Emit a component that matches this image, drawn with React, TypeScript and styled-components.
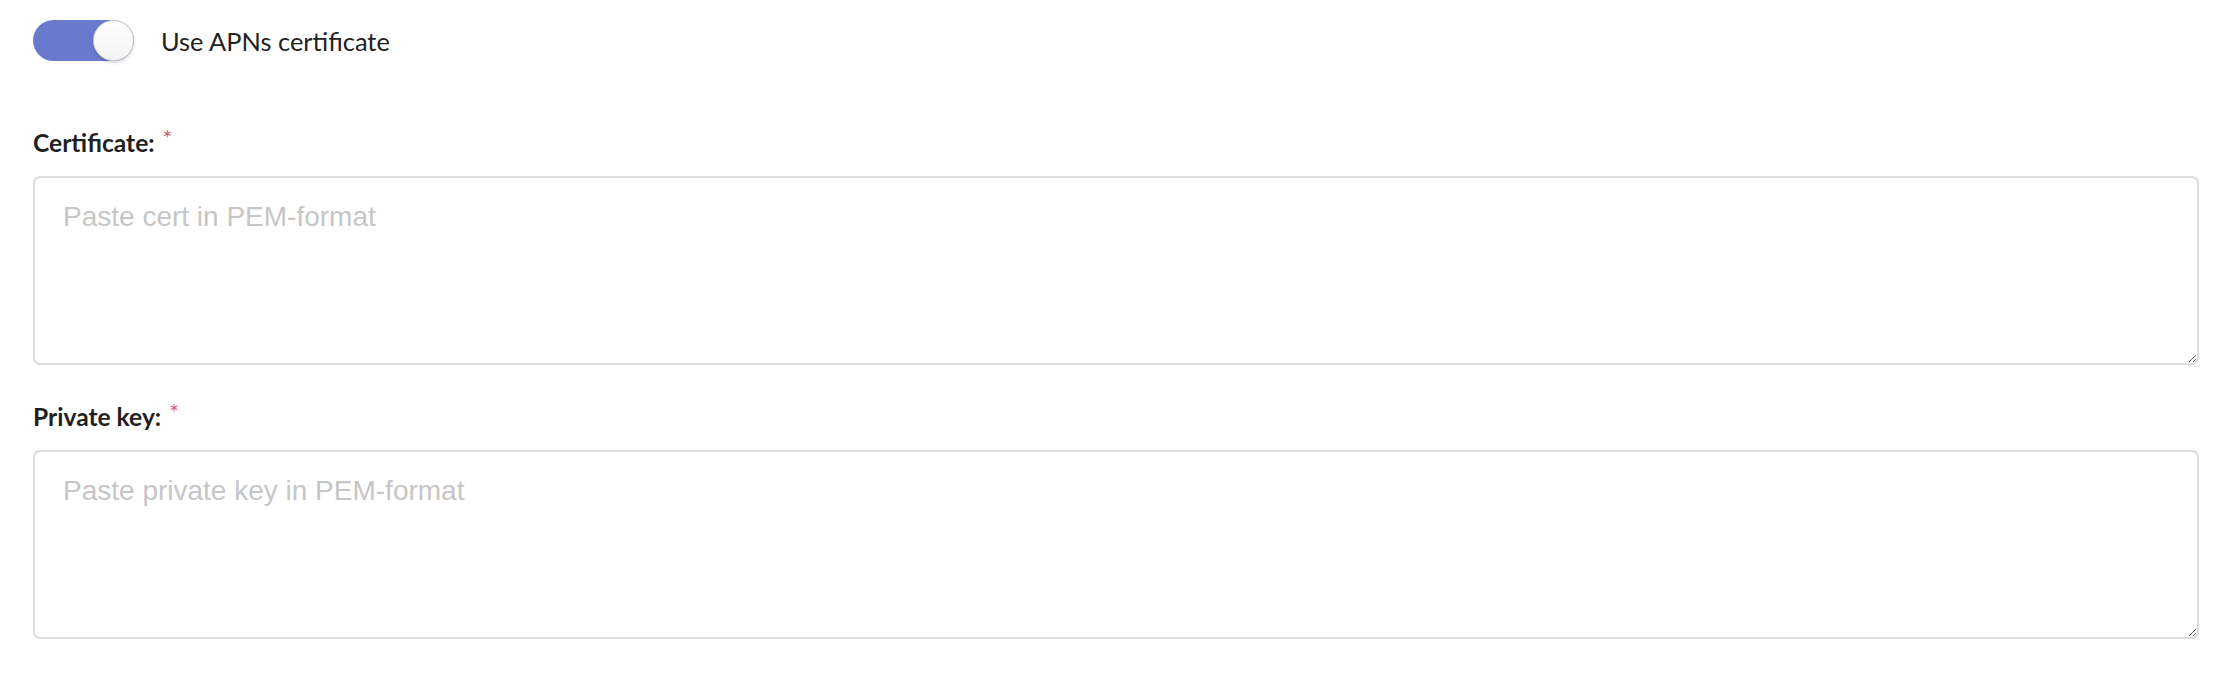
import React from "react";
import styled, { createGlobalStyle } from "styled-components";

const GlobalStyle = createGlobalStyle`
  body {
    margin: 0;
    background: #ffffff;
    font-family: Lato, "Noto Sans", sans-serif;
  }
`;

const fields = [
  { label: "Certificate:", placeholder: "Paste cert in PEM-format" },
  { label: "Private key:", placeholder: "Paste private key in PEM-format" },
];

const App = () => {
  return (
    <>
      <GlobalStyle />
      <Page>
        <ToggleRow>
          <Track>
            <Knob />
          </Track>
          <ToggleLabel>Use APNs certificate</ToggleLabel>
        </ToggleRow>

        {fields.map((field) => (
          <Field key={field.label}>
            <Label>
              {field.label}
              <Required>*</Required>
            </Label>
            <TextArea placeholder={field.placeholder} />
          </Field>
        ))}
      </Page>
    </>
  );
};

export default App;

const Page = styled.div`
  display: flex;
  flex-direction: column;
  padding: 20px 37px 0 33px;
`;

const ToggleRow = styled.div`
  display: flex;
  flex-direction: row;
  align-items: center;
  gap: 27px;
  height: 41px;
  margin-bottom: 30px;
`;

const Track = styled.div`
  display: flex;
  justify-content: flex-end;
  width: 101px;
  height: 41px;

  background-color: #6979cc;
  border-radius: 21px;
`;

const Knob = styled.div`
  box-sizing: border-box;
  width: 41px;
  height: 41px;

  background: linear-gradient(180deg, #ffffff 0%, #f3f3f3 100%);
  border: 1.5px solid #d4d4d4;
  border-radius: 50%;
  box-shadow: 0 2px 3px rgba(0, 0, 0, 0.15);
`;

const ToggleLabel = styled.span`
  color: #222222;
  font-size: 25.4px;
`;

const Field = styled.div`
  display: flex;
  flex-direction: column;
  margin-top: 37px;
`;

const Label = styled.label`
  margin-bottom: 18px;

  color: #1f1f1f;
  font-size: 24.6px;
  font-weight: 700;
  line-height: 30px;
`;

const Required = styled.span`
  display: inline-block;
  margin-left: 8px;
  margin-top: 1px;

  color: #d35f78;
  font-size: 23px;
  font-weight: 400;
  line-height: 18px;
  vertical-align: top;
`;

const TextArea = styled.textarea`
  box-sizing: border-box;
  width: 100%;
  height: 189px;
  padding: 23px 28px;

  border: 2px solid #dddddd;
  border-radius: 7px;
  outline: none;

  color: #333333;
  font-family: "Liberation Sans", Arial, sans-serif;
  font-size: 28px;

  &::placeholder {
    color: #c6c6c6;
    opacity: 1;
  }
`;
